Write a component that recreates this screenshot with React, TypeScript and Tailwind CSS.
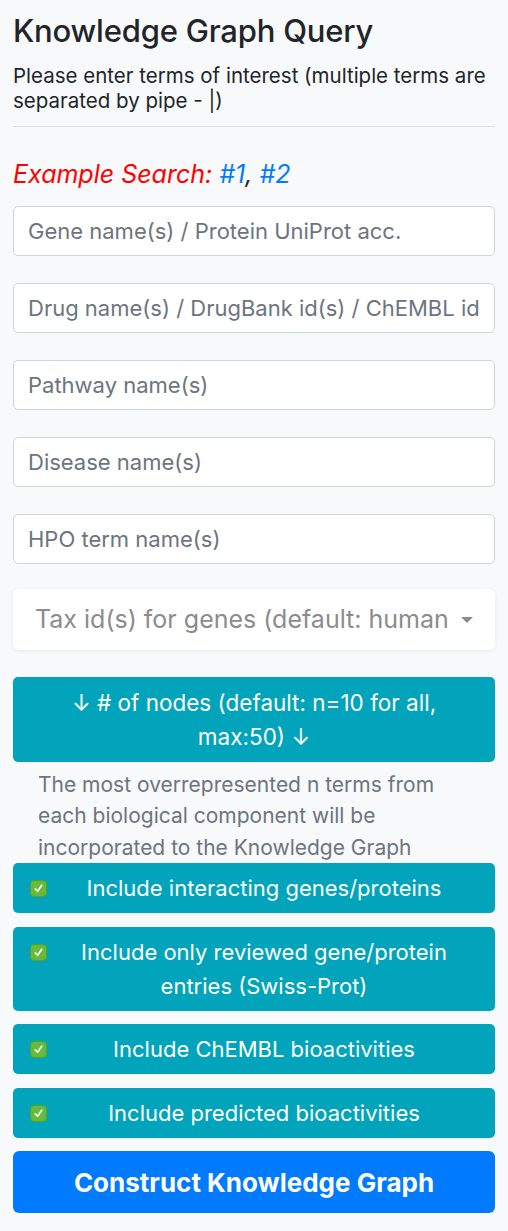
import React from "react";

const inputs = [
    "Gene name(s) / Protein UniProt acc.",
    "Drug name(s) / DrugBank id(s) / ChEMBL id(s)",
    "Pathway name(s)",
    "Disease name(s)",
    "HPO term name(s)",
];

const options = [
    ["Include interacting genes/proteins"],
    ["Include only reviewed gene/protein", "entries (Swiss-Prot)"],
    ["Include ChEMBL bioactivities"],
    ["Include predicted bioactivities"],
];

const CheckBox = () => (
    <span className="absolute left-[17px] top-[17px] w-[17px] h-[17px] rounded-[4px] bg-[#66bb3d] border border-[#52a22f] flex items-center justify-center">
        <svg width="11" height="11" viewBox="0 0 12 12" fill="none">
            <path d="M2.5 6.5 L5 9 L9.5 2.5" stroke="white" strokeWidth="1.8" strokeLinecap="round" strokeLinejoin="round" />
        </svg>
    </span>
);

export default function App() {
    return (
        <div className="min-h-[1231px] w-full bg-[#f8f9fa] font-['Inter',sans-serif] text-[#212529]">
            <div className="px-[13px] pt-[12px] pb-[18px]">
                <h1 className="text-[31px] font-medium leading-[38px] tracking-[-0.2px]">Knowledge Graph Query</h1>
                <p className="mt-[13px] text-[20.5px] leading-[25px]">
                    Please enter terms of interest (multiple terms are separated by pipe - |)
                </p>
                <hr className="mt-[13px] border-t border-[#dcdfe2]" />

                <p className="mt-[32px] text-[25px] leading-[30px] italic text-[#ff0000]">
                    Example Search: <a className="text-[#007bff]">#1</a>
                    <span className="text-[#212529]">,</span> <a className="text-[#007bff]">#2</a>
                </p>

                <div className="mt-[17px] flex flex-col gap-[27px]">
                    {inputs.map((p) => (
                        <input
                            key={p}
                            placeholder={p}
                            className="h-[50px] w-full rounded-[5px] border border-[#ced4da] bg-white px-[14px] text-[22px] placeholder:text-[#6c757d] outline-none"
                        />
                    ))}
                </div>

                <div className="mt-[25px] h-[61px] w-full rounded-[6px] bg-white shadow-[0_1px_4px_rgba(0,0,0,0.08)] flex items-center pl-[22px] pr-[22px]">
                    <span className="flex-1 overflow-hidden whitespace-nowrap text-[25px] text-[#8c8c8c]">
                        Tax id(s) for genes (default: human
                    </span>
                    <span className="ml-[6px] w-0 h-0 border-l-[6px] border-r-[6px] border-t-[6px] border-l-transparent border-r-transparent border-t-[#8c8c8c]" />
                </div>

                <div className="mt-[27px] h-[85px] w-full rounded-[5px] bg-[#01a4ba] text-white text-[22.5px] leading-[34px] flex flex-col items-center justify-center">
                    <span>↓ # of nodes (default: n=10 for all,</span>
                    <span>max:50) ↓</span>
                </div>

                <p className="mt-[6.5px] pl-[25px] pr-[25px] text-[21px] leading-[31.5px] text-[#6c757d]">
                    The most overrepresented n terms from each biological component will be incorporated to the Knowledge Graph
                </p>

                <div className="flex flex-col gap-[13.5px]">
                    {options.map((lines) => (
                        <div
                            key={lines[0]}
                            className="relative w-full rounded-[5px] bg-[#01a4ba] text-white text-[22px] leading-[34px] pl-[50px] pr-[30px] py-[8px] flex flex-col items-center"
                        >
                            <CheckBox />
                            {lines.map((l) => (
                                <span key={l} className="whitespace-nowrap">{l}</span>
                            ))}
                        </div>
                    ))}
                </div>

                <button className="mt-[13.5px] h-[62px] w-full rounded-[6px] bg-[#007bff] text-white text-[26px] font-bold">
                    Construct Knowledge Graph
                </button>
            </div>
        </div>
    );
}
